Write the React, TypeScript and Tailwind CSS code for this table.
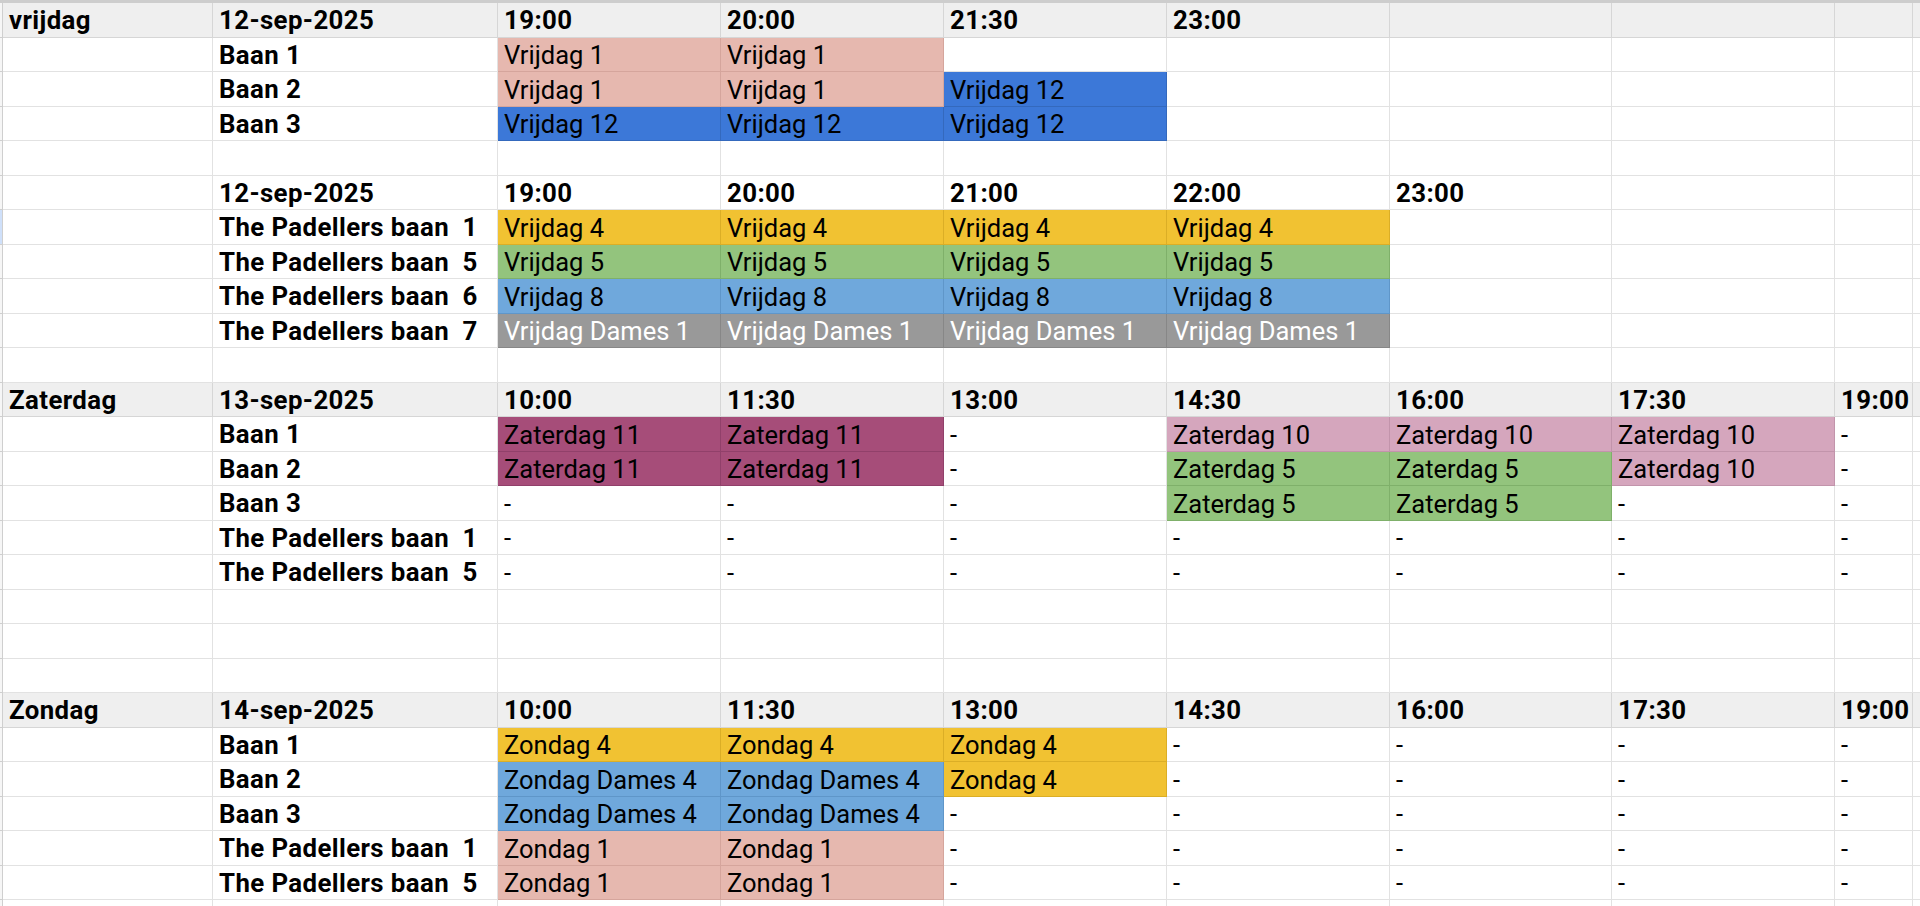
import React from 'react';

type Tone = 'salmon' | 'blue' | 'yellow' | 'green' | 'lblue' | 'gray' | 'maroon' | 'pink';
type Cell = string | [string, Tone];
type Kind = 'day' | 'sub' | 'lane' | 'blank';
interface Row {
    kind: Kind;
    cells: Cell[];
    mark?: boolean;
}

const tones: Record<Tone, string> = {
    salmon: 'bg-[#e6b8af] border-[#d5a59c]',
    blue: 'bg-[#3c78d8] border-[#3469bd]',
    yellow: 'bg-[#f1c232] border-[#dbae26]',
    green: 'bg-[#93c47d] border-[#7fb06a]',
    lblue: 'bg-[#6fa8dc] border-[#5f96c9]',
    gray: 'bg-[#999999] border-[#878787] text-white',
    maroon: 'bg-[#a64d79] border-[#91406a]',
    pink: 'bg-[#d5a6bd] border-[#c294ab]',
};

const TP = (n: number) => `The Padellers baan  ${n}`;
const dashes = (n: number): Cell[] => Array.from({ length: n }, () => '-');

const rows: Row[] = [
    { kind: 'day', cells: ['vrijdag', '12-sep-2025', '19:00', '20:00', '21:30', '23:00', '', '', ''] },
    { kind: 'lane', cells: ['', 'Baan 1', ['Vrijdag 1', 'salmon'], ['Vrijdag 1', 'salmon']] },
    { kind: 'lane', cells: ['', 'Baan 2', ['Vrijdag 1', 'salmon'], ['Vrijdag 1', 'salmon'], ['Vrijdag 12', 'blue']] },
    { kind: 'lane', cells: ['', 'Baan 3', ['Vrijdag 12', 'blue'], ['Vrijdag 12', 'blue'], ['Vrijdag 12', 'blue']] },
    { kind: 'blank', cells: [] },
    { kind: 'sub', cells: ['', '12-sep-2025', '19:00', '20:00', '21:00', '22:00', '23:00'] },
    { kind: 'lane', mark: true, cells: ['', TP(1), ['Vrijdag 4', 'yellow'], ['Vrijdag 4', 'yellow'], ['Vrijdag 4', 'yellow'], ['Vrijdag 4', 'yellow']] },
    { kind: 'lane', cells: ['', TP(5), ['Vrijdag 5', 'green'], ['Vrijdag 5', 'green'], ['Vrijdag 5', 'green'], ['Vrijdag 5', 'green']] },
    { kind: 'lane', cells: ['', TP(6), ['Vrijdag 8', 'lblue'], ['Vrijdag 8', 'lblue'], ['Vrijdag 8', 'lblue'], ['Vrijdag 8', 'lblue']] },
    { kind: 'lane', cells: ['', TP(7), ['Vrijdag Dames 1', 'gray'], ['Vrijdag Dames 1', 'gray'], ['Vrijdag Dames 1', 'gray'], ['Vrijdag Dames 1', 'gray']] },
    { kind: 'blank', cells: [] },
    { kind: 'day', cells: ['Zaterdag', '13-sep-2025', '10:00', '11:30', '13:00', '14:30', '16:00', '17:30', '19:00'] },
    { kind: 'lane', cells: ['', 'Baan 1', ['Zaterdag 11', 'maroon'], ['Zaterdag 11', 'maroon'], '-', ['Zaterdag 10', 'pink'], ['Zaterdag 10', 'pink'], ['Zaterdag 10', 'pink'], '-'] },
    { kind: 'lane', cells: ['', 'Baan 2', ['Zaterdag 11', 'maroon'], ['Zaterdag 11', 'maroon'], '-', ['Zaterdag 5', 'green'], ['Zaterdag 5', 'green'], ['Zaterdag 10', 'pink'], '-'] },
    { kind: 'lane', cells: ['', 'Baan 3', '-', '-', '-', ['Zaterdag 5', 'green'], ['Zaterdag 5', 'green'], '-', '-'] },
    { kind: 'lane', cells: ['', TP(1), ...dashes(7)] },
    { kind: 'lane', cells: ['', TP(5), ...dashes(7)] },
    { kind: 'blank', cells: [] },
    { kind: 'blank', cells: [] },
    { kind: 'blank', cells: [] },
    { kind: 'day', cells: ['Zondag', '14-sep-2025', '10:00', '11:30', '13:00', '14:30', '16:00', '17:30', '19:00'] },
    { kind: 'lane', cells: ['', 'Baan 1', ['Zondag 4', 'yellow'], ['Zondag 4', 'yellow'], ['Zondag 4', 'yellow'], ...dashes(4)] },
    { kind: 'lane', cells: ['', 'Baan 2', ['Zondag Dames 4', 'lblue'], ['Zondag Dames 4', 'lblue'], ['Zondag 4', 'yellow'], ...dashes(4)] },
    { kind: 'lane', cells: ['', 'Baan 3', ['Zondag Dames 4', 'lblue'], ['Zondag Dames 4', 'lblue'], ...dashes(5)] },
    { kind: 'lane', cells: ['', TP(1), ['Zondag 1', 'salmon'], ['Zondag 1', 'salmon'], ...dashes(5)] },
    { kind: 'lane', cells: ['', TP(5), ['Zondag 1', 'salmon'], ['Zondag 1', 'salmon'], ...dashes(5)] },
    { kind: 'blank', cells: [] },
];

const GRID = 'grid grid-cols-[3px_210px_285px_223px_223px_223px_223px_222px_223px_78px_1fr]';

const SheetRow: React.FC<{ row: Row; first: boolean }> = ({ row, first }) => {
    const isDay = row.kind === 'day';
    const height = first ? 'h-[34.5px]' : 'h-[34.5px]';
    const base = isDay ? 'bg-[#efefef] border-[#d6d6d6]' : 'bg-white border-[#e2e2e2]';
    const cols = Array.from({ length: 9 }, (_, i) => row.cells[i] ?? '');

    return (
        <div className={`${GRID} ${height} shrink-0`}>
            <div className={`border-r border-b border-[#cfcfcf] ${row.mark ? 'bg-[#cfe0fa]' : 'bg-[#f6f6f6]'}`} />
            {cols.map((cell, i) => {
                const text = typeof cell === 'string' ? cell : cell[0];
                const tone = typeof cell === 'string' ? null : tones[cell[1]];
                const bold = i < 2 || row.kind === 'day' || row.kind === 'sub';
                return (
                    <div
                        key={i}
                        className={`flex items-center overflow-hidden border-r border-b pl-[6px] pt-[2px] whitespace-pre ${tone ?? base} ${
                            bold ? 'font-bold tracking-[0.4px] text-[25.8px]' : 'font-normal text-[25.5px]'
                        }`}
                    >
                        {text}
                    </div>
                );
            })}
            <div className={`border-b ${base}`} />
        </div>
    );
};

export default function App() {
    return (
        <div className="w-[1920px] h-[906px] overflow-hidden bg-white text-black" style={{ fontFamily: 'Roboto, "Noto Sans", sans-serif' }}>
            <div className="h-[3px] bg-[#cdcdcd]" />
            <div className="flex flex-col">
                {rows.map((row, i) => (
                    <SheetRow key={i} row={row} first={i === 0} />
                ))}
            </div>
        </div>
    );
}
